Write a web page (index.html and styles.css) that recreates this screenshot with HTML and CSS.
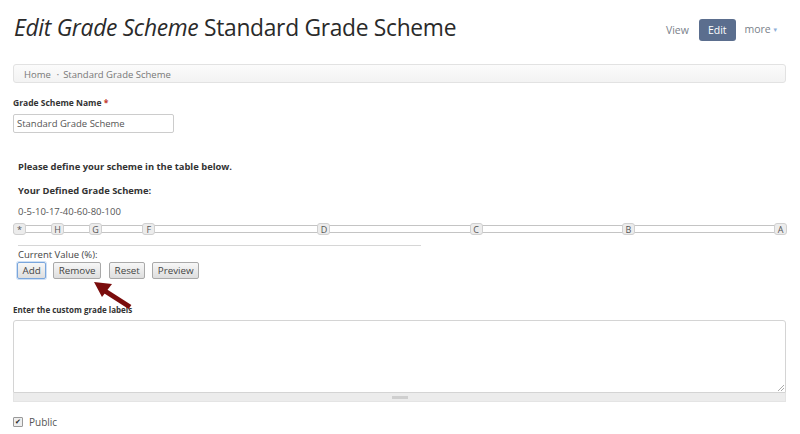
FILE: index.html
```html
<!DOCTYPE html>
<html>
<head>
<meta charset="utf-8">
<link rel="stylesheet" href="styles.css">
</head>
<body>
<div class="page">
  <header class="header">
    <h1 class="title"><em>Edit Grade Scheme</em> Standard Grade Scheme</h1>
    <nav class="actions">
      <a class="act">View</a>
      <a class="act active">Edit</a>
      <a class="act">more <span class="caret">&#9662;</span></a>
    </nav>
  </header>

  <div class="breadcrumb">
    <span>Home</span><span class="sep">&#8226;</span><span>Standard Grade Scheme</span>
  </div>

  <div class="field">
    <label class="lbl">Grade Scheme Name <span class="req">*</span></label>
    <div class="input">Standard Grade Scheme</div>
  </div>

  <div class="scheme">
    <p class="intro">Please define your scheme in the table below.</p>
    <p class="intro2">Your Defined Grade Scheme:</p>
    <p class="values">0-5-10-17-40-60-80-100</p>
    <div class="slider">
      <div class="track"></div>
      <div class="handles">
        <span class="handle" style="left:0%">*</span>
        <span class="handle" style="left:5%">H</span>
        <span class="handle" style="left:10%">G</span>
        <span class="handle" style="left:17%">F</span>
        <span class="handle" style="left:40%">D</span>
        <span class="handle" style="left:60%">C</span>
        <span class="handle" style="left:80%">B</span>
        <span class="handle" style="left:100%">A</span>
      </div>
    </div>
    <div class="rule"></div>
    <div class="current">Current Value (%):</div>
    <div class="buttons">
      <button class="btn focus">Add</button>
      <button class="btn">Remove</button>
      <button class="btn">Reset</button>
      <button class="btn">Preview</button>
      <svg class="arrow" width="50" height="34" viewBox="0 0 50 34">
        <line x1="39" y1="28" x2="14" y2="12" stroke="#7a0c0c" stroke-width="5"/>
        <polygon points="3,3 21,5 11,18" fill="#7a0c0c"/>
      </svg>
    </div>
  </div>

  <div class="field labels">
    <label class="lbl small">Enter the custom grade labels</label>
    <div class="textarea">
      <div class="ta-box"><span class="grip"></span></div>
      <div class="ta-bar"><span class="bar-handle"></span></div>
    </div>
  </div>

  <div class="check">
    <span class="cb">&#10004;</span><span class="cb-label">Public</span>
  </div>
</div>
</body>
</html>
```

FILE: styles.css
```css
html, body { margin: 0; padding: 0; background: #fff; }
body { font-family: "Open Sans", "DejaVu Sans", sans-serif; color: #333; }
.page { padding: 0 14px 0 13px; position: relative; }

.header { display: flex; align-items: flex-start; justify-content: space-between; height: 64px; }
.title { margin: 13px 0 0 1px; font-size: 22.8px; font-weight: 400; color: #2a2a2a; letter-spacing: -0.3px; line-height: 30px; }
.title em { font-style: italic; }
.actions { display: flex; align-items: center; margin-top: 18px; margin-right: 0; }
.act { font-size: 10.5px; color: #7a7f8a; padding: 0 9px; line-height: 22px; }
.act:first-child { margin-right: 1px; }
.act.active { background: #5b6e8e; color: #fff; border-radius: 3px; padding: 0 9px; }
.caret { font-size: 7px; color: #8fb0d8; vertical-align: 1px; }

.breadcrumb { height: 15px; padding-top: 2px; border: 1px solid #e2e2e2; border-radius: 3px; background: linear-gradient(#fbfbfb, #f3f3f3); font-size: 9.5px; color: #777; display: flex; align-items: center; padding-left: 10px; }
.sep { font-size: 6px; margin: 0 4px 0 6px; color: #888; }

.field { margin-top: 14px; }
.lbl { display: block; font-size: 8.5px; font-weight: 700; color: #333; line-height: 12px; }
.req { color: #c0392b; }
.input { margin-top: 5px; width: 156px; height: 17px; border: 1px solid #ccc; border-radius: 2px; font-size: 9.5px; color: #555; line-height: 17px; padding-left: 3px; }

.scheme { padding-left: 5px; margin-top: 27px; }
.intro, .intro2 { margin: 0; font-size: 9.4px; font-weight: 700; color: #333; line-height: 14px; }
.intro2 { margin-top: 10px; }
.values { margin: 7px 0 0; font-size: 9.5px; color: #555; line-height: 14px; }
.slider { position: relative; height: 12px; margin: 4px 0 0 -5px; }
.track { position: absolute; left: 0; right: 0; top: 2px; height: 6px; border-top: 1px solid #c4c4c4; border-bottom: 1px solid #c4c4c4; background: #fff; }
.handles { position: absolute; left: 0; right: 12px; top: 0; height: 12px; }
.handle { position: absolute; top: 0; width: 11px; height: 10px; border: 1px solid #d0d0d0; border-radius: 3px; background: #ececec; font-size: 9px; line-height: 11px; text-align: center; color: #555; }

.rule { width: 403px; height: 1px; background: #d6d6d6; margin-top: 10px; }
.current { font-size: 9.5px; color: #444; margin-top: 3px; line-height: 12px; }
.buttons { display: flex; gap: 7px; margin-top: 1px; margin-left: -1px; position: relative; }
.btn { font-family: "Open Sans", "DejaVu Sans", sans-serif; font-size: 9.8px; color: #444; height: 17px; padding: 0 4.5px; border: 1px solid #a9a9a9; border-radius: 2px; background: linear-gradient(#f7f7f7, #dedede); line-height: 15px; }
.btn:nth-child(3) { margin-left: 1px; }
.btn:nth-child(4) { margin-left: 0; }
.btn.focus { border-color: #7aa6dc; box-shadow: 0 0 0 1px #cfe0f5; }
.arrow { position: absolute; left: 74px; top: 17px; }

.labels { margin-top: 25px; }
.lbl.small { font-size: 8px; letter-spacing: 0; }
.textarea { margin-top: 4px; }
.ta-box { position: relative; height: 71px; border: 1px solid #d4d4d4; border-radius: 3px 3px 0 0; background: #fff; }
.grip { position: absolute; right: 1px; bottom: 1px; width: 6px; height: 6px; background: linear-gradient(135deg, transparent 45%, #aaa 45%, #aaa 55%, transparent 55%, transparent 70%, #aaa 70%, #aaa 80%, transparent 80%); }
.ta-bar { height: 8px; background: #ececec; border: 1px solid #e4e4e4; border-top: none; display: flex; justify-content: center; align-items: center; }
.bar-handle { width: 16px; height: 3px; background: #cfcfcf; }

.check { display: flex; align-items: center; margin-top: 13px; }
.cb { width: 8px; height: 8px; border: 1px solid #999; background: #eee; font-size: 7px; line-height: 8px; text-align: center; color: #222; border-radius: 1px; }
.cb-label { margin-left: 6px; font-size: 10px; color: #555; }
```
